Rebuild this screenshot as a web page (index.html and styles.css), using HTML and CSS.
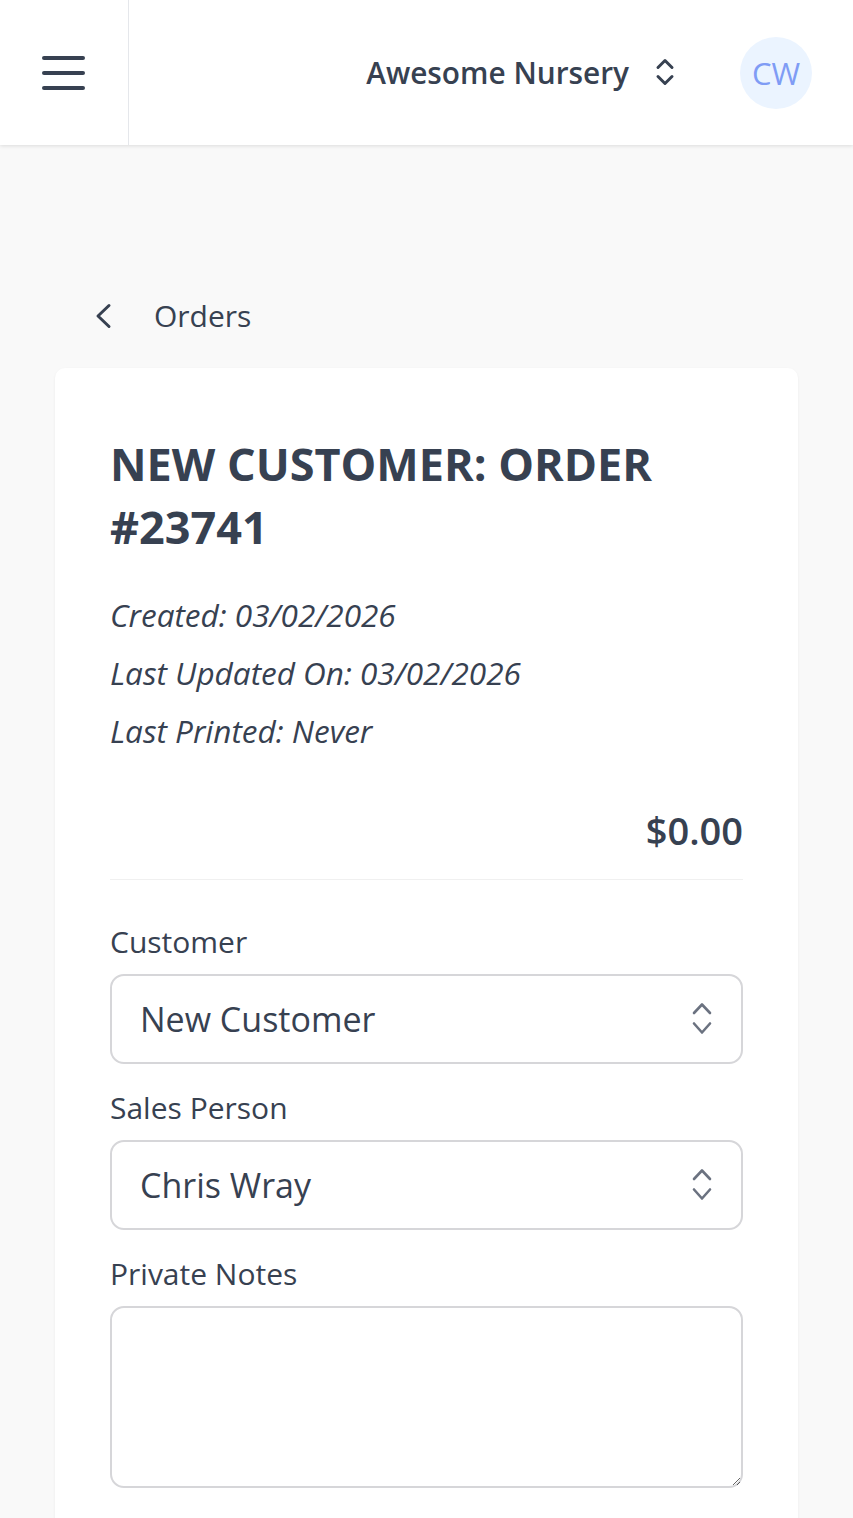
FILE: index.html
```html
<!DOCTYPE html>
<html lang="en">
<head>
<meta charset="utf-8">
<title>Order #23741</title>
<link rel="stylesheet" href="styles.css">
</head>
<body>
<header class="topbar">
  <div class="menu-btn">
    <div class="hamburger"><span></span><span></span><span></span></div>
  </div>
  <div class="topbar-right">
    <div class="org">
      <span class="org-name">Awesome Nursery</span>
      <svg class="org-icon" width="20" height="29" viewBox="0 0 20 29" fill="none" stroke="#374151" stroke-width="3" stroke-linecap="round" stroke-linejoin="round">
        <polyline points="3,9.5 10,2.5 17,9.5"/>
        <polyline points="3,18.5 10,25.5 17,18.5"/>
      </svg>
    </div>
    <div class="avatar">CW</div>
  </div>
</header>

<main class="main">
  <nav class="crumb">
    <svg class="crumb-icon" width="18" height="26" viewBox="0 0 18 26" fill="none" stroke="#374151" stroke-width="3" stroke-linecap="round" stroke-linejoin="round">
      <polyline points="15,2.5 4,13 15,23.5"/>
    </svg>
    <span class="crumb-text">Orders</span>
  </nav>

  <section class="card">
    <h1 class="title">New Customer: Order #23741</h1>
    <div class="meta">
      <p>Created: 03/02/2026</p>
      <p>Last Updated On: 03/02/2026</p>
      <p>Last Printed: Never</p>
    </div>
    <div class="total">$0.00</div>

    <form class="form">
      <div class="field">
        <label class="label" for="customer">Customer</label>
        <div class="select-wrap">
          <select id="customer" class="select"><option>New Customer</option></select>
          <svg class="select-icon" width="22" height="36" viewBox="0 0 22 36" fill="none" stroke="#6b7280" stroke-width="2.6" stroke-linecap="round" stroke-linejoin="round">
            <polyline points="3,12 11,3.5 19,12"/>
            <polyline points="3,22.5 11,31.5 19,22.5"/>
          </svg>
        </div>
      </div>
      <div class="field">
        <label class="label" for="sales">Sales Person</label>
        <div class="select-wrap">
          <select id="sales" class="select"><option>Chris Wray</option></select>
          <svg class="select-icon" width="22" height="36" viewBox="0 0 22 36" fill="none" stroke="#6b7280" stroke-width="2.6" stroke-linecap="round" stroke-linejoin="round">
            <polyline points="3,12 11,3.5 19,12"/>
            <polyline points="3,22.5 11,31.5 19,22.5"/>
          </svg>
        </div>
      </div>
      <div class="field">
        <label class="label" for="notes">Private Notes</label>
        <textarea id="notes" class="textarea"></textarea>
      </div>
    </form>
  </section>
</main>
</body>
</html>
```
FILE: styles.css
```css
* { box-sizing: border-box; }

body {
  margin: 0;
  background: #f9f9f9;
  font-family: "Open Sans", "Noto Sans", sans-serif;
  color: #374151;
}

.topbar {
  position: relative;
  z-index: 1;
  height: 145px;
  background: #ffffff;
  display: flex;
  box-shadow: 0 1px 4px rgba(0, 0, 0, 0.12);
}

.menu-btn {
  width: 129px;
  border-right: 1px solid #e5e7eb;
  display: flex;
  align-items: center;
  justify-content: center;
  padding-right: 1px;
}

.hamburger {
  display: flex;
  flex-direction: column;
  gap: 11px;
}

.hamburger span {
  display: block;
  width: 43px;
  height: 4px;
  border-radius: 2px;
  background: #374151;
}

.topbar-right {
  flex: 1;
  display: flex;
  align-items: center;
  justify-content: flex-end;
  padding-right: 41px;
}

.org {
  display: flex;
  align-items: center;
}

.org-name {
  font-size: 29.8px;
  font-weight: 600;
  line-height: 40px;
  color: #374151;
}

.org-icon {
  margin-left: 26px;
  display: block;
}

.avatar {
  margin-left: 65px;
  width: 72px;
  height: 72px;
  border-radius: 50%;
  background: #ebf4ff;
  color: #7f9cf5;
  font-size: 31px;
  display: flex;
  align-items: center;
  justify-content: center;
}

.main {
  padding: 151px 55px 0;
}

.crumb {
  display: flex;
  align-items: center;
  height: 40px;
  padding-left: 39px;
}

.crumb-icon { display: block; }

.crumb-text {
  margin-left: 42px;
  font-size: 30px;
  line-height: 40px;
  color: #374151;
}

.card {
  margin-top: 32px;
  background: #ffffff;
  border-radius: 10px;
  padding: 64px 55px 60px;
  box-shadow: 0 1px 3px rgba(0, 0, 0, 0.06);
}

.title {
  margin: 0;
  font-size: 45px;
  line-height: 63px;
  font-weight: 700;
  text-transform: uppercase;
  color: #374151;
}

.meta {
  margin-top: 28px;
}

.meta p {
  margin: 0;
  font-size: 31.5px;
  line-height: 58px;
  font-style: italic;
}

.total {
  margin-top: 46px;
  padding-bottom: 25px;
  border-bottom: 1px solid #f0f0f0;
  text-align: right;
  font-size: 38px;
  line-height: 48px;
  font-weight: 600;
}

.form {
  margin-top: 42px;
  display: flex;
  flex-direction: column;
  gap: 24px;
}

.label {
  display: block;
  font-size: 30px;
  line-height: 40px;
  margin-bottom: 12px;
}

.select-wrap {
  position: relative;
}

.select {
  display: block;
  width: 100%;
  height: 90px;
  margin: 0;
  padding: 0 70px 0 28px;
  border: 2px solid #d6d6d9;
  border-radius: 14px;
  background: #ffffff;
  font-family: inherit;
  font-size: 34px;
  color: #374151;
  appearance: none;
  -webkit-appearance: none;
}

.select-icon {
  position: absolute;
  right: 30px;
  top: 50%;
  transform: translateY(-50%);
  pointer-events: none;
}

.textarea {
  display: block;
  width: 100%;
  height: 182px;
  margin: 0;
  border: 2px solid #d6d6d9;
  border-radius: 14px;
  background: #ffffff;
  font-family: inherit;
  font-size: 30px;
  resize: vertical;
}
```
